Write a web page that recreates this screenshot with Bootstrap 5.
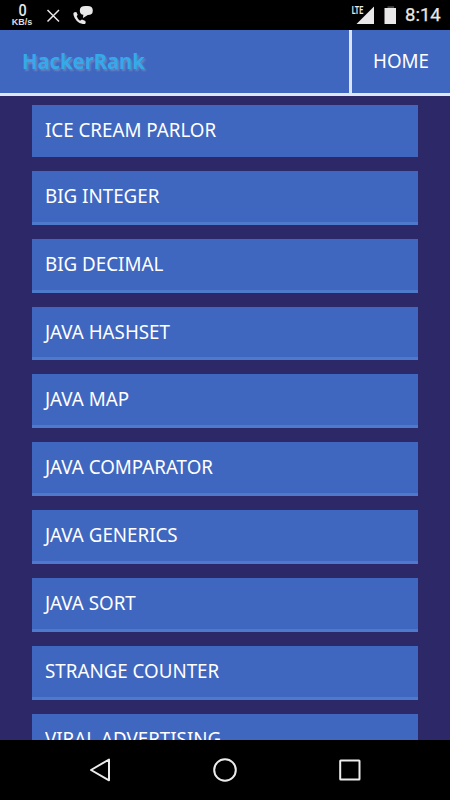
<!DOCTYPE html>
<html lang="en">
<head>
<meta charset="utf-8">
<meta name="viewport" content="width=device-width, initial-scale=1">
<title>HackerRank</title>
<link href="https://cdn.jsdelivr.net/npm/bootstrap@5.3.0/dist/css/bootstrap.min.css" rel="stylesheet">
<style>
body{height:800px;background:#2d2868;font-family:"Noto Sans",sans-serif;color:#fff}
.status-bar{height:30px;background:#000;color:#e8e8e8;font-family:Roboto,sans-serif}
.speed{width:23px;margin-left:10.5px;padding-top:3px;line-height:1}
.speed-value{font-size:17px;height:15px;line-height:15px;font-weight:500;transform:scaleX(.85)}
.speed-unit{font:700 9px/9px "Liberation Sans",sans-serif;color:#ddd}
.clock{font-size:18.5px;line-height:31px;width:35px;margin-left:9px;margin-right:10px;white-space:nowrap;-webkit-text-stroke:.25px #e8e8e8}
.top-nav{height:66.3px;background:#3f67c0;border-bottom:3px solid #dfe6f8}
.site-name{font-size:21px;font-weight:700;color:#35aaea;text-shadow:1.5px 1.5px 2px rgba(130,145,190,.7);padding-left:21.5px}
.home-link{width:101px;border-left:3px solid #dbe4fa;font-size:20.5px;padding:0 0 2px 21px}
.narrow{display:inline-block;transform:scaleX(.915);transform-origin:left center;white-space:nowrap}
.site-name .narrow{transform:scaleX(.963)}
.topic-list{padding:8.8px 32px 0 31.5px}
.topic{height:53.9px;flex:none;margin-bottom:13.98px;background:#3f67c0;border-bottom:3px solid #4f7acb;font-size:20.5px;line-height:49px;padding-left:13.5px}
.topic:first-child{height:51.8px;border-bottom:0}
.system-nav{height:60px;background:#000}
svg{display:block;flex:none}
</style>
</head>
<body class="d-flex flex-column overflow-hidden m-0">
<header class="status-bar d-flex flex-shrink-0">
  <div class="speed text-center"><div class="speed-value">0</div><div class="speed-unit">KB/s</div></div>
  <svg width="76" height="30" viewBox="33.5 0 76 30" aria-hidden="true">
    <path d="M47 10 58.5 21.5M58.5 10 47 21.5" stroke="#e8e8e8" stroke-width="1.5"/>
    <path d="M74 12.2Q72.4 12.5 73 15Q75 22.5 82.3 24Q84.6 24.4 85.2 22.9L84.9 20.9 81.5 19.5 79.5 20.8Q77 19 76.2 16.3L77.2 14.7 75.8 12.1Z" fill="#e8e8e8"/>
    <path d="M85 6H87Q92.3 6 92.3 10.4Q92.3 15 87.3 15L82.5 18 82.8 14.8Q79.3 14.2 79.3 10.4Q79.3 6 85 6Z" fill="#e8e8e8"/>
  </svg>
  <svg class="ms-auto" width="46" height="30" viewBox="350 0 46 30" aria-hidden="true">
    <text x="351.8" y="14" font-family="Roboto,sans-serif" font-size="10.5" font-weight="700" textLength="11.5" lengthAdjust="spacingAndGlyphs" fill="#e8e8e8">LTE</text>
    <path d="M356.5 24 374 6.5V24Z" fill="#e8e8e8"/>
    <path d="M384.5 8H397V24H384.5Z" fill="#e8e8e8"/><path d="M387.5 6.2H394V8H387.5Z" fill="#444"/>
  </svg>
  <div class="clock">8:14</div>
</header>
<nav class="top-nav d-flex flex-shrink-0">
  <div class="site-name d-flex align-items-center"><span class="narrow">HackerRank</span></div>
  <div class="home-link d-flex align-items-center ms-auto"><span class="narrow">HOME</span></div>
</nav>
<main class="topic-list d-flex flex-column flex-grow-1 overflow-hidden">
  <div class="topic"><span class="narrow">ICE CREAM PARLOR</span></div>
  <div class="topic"><span class="narrow">BIG INTEGER</span></div>
  <div class="topic"><span class="narrow">BIG DECIMAL</span></div>
  <div class="topic"><span class="narrow">JAVA HASHSET</span></div>
  <div class="topic"><span class="narrow">JAVA MAP</span></div>
  <div class="topic"><span class="narrow">JAVA COMPARATOR</span></div>
  <div class="topic"><span class="narrow">JAVA GENERICS</span></div>
  <div class="topic"><span class="narrow">JAVA SORT</span></div>
  <div class="topic"><span class="narrow">STRANGE COUNTER</span></div>
  <div class="topic"><span class="narrow">VIRAL ADVERTISING</span></div>
</main>
<footer class="system-nav flex-shrink-0">
  <svg width="450" height="60" viewBox="0 740 450 60" fill="none" stroke="#ececec" stroke-width="2" stroke-linejoin="round" aria-hidden="true">
    <path d="M109 759.5V780.3L91 770Z"/><circle cx="225" cy="770" r="10.8"/><rect x="340.2" y="760.5" width="19.3" height="19" rx=".5"/>
  </svg>
</footer>
<script src="https://cdn.jsdelivr.net/npm/bootstrap@5.3.0/dist/js/bootstrap.bundle.min.js"></script>
</body>
</html>
